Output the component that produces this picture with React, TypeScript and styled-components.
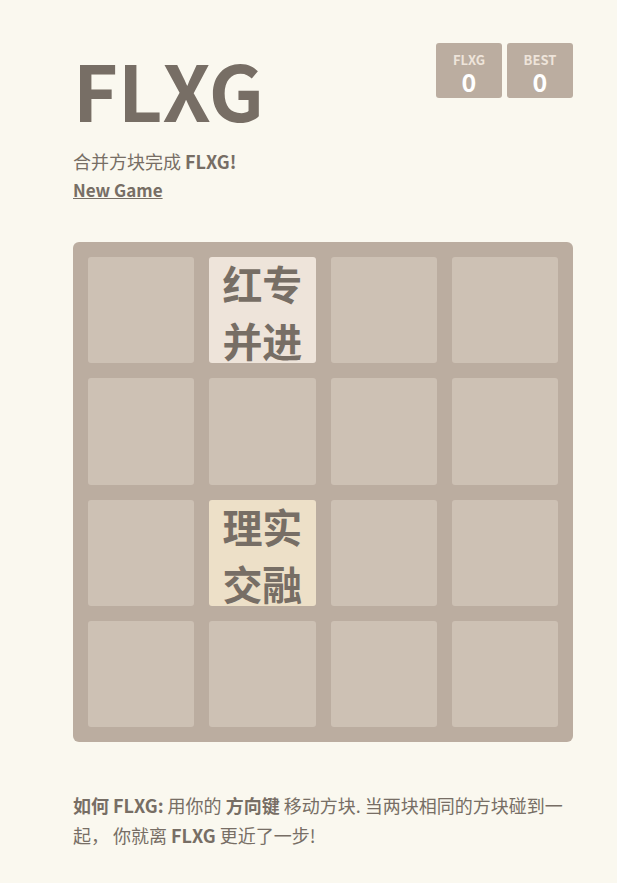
import React from "react";
import styled, { createGlobalStyle } from "styled-components";

const GlobalStyle = createGlobalStyle`
  html, body {
    margin: 0;
    padding: 0;
    background: #faf8ef;
    color: #776e65;
    font-family: "Noto Sans CJK SC", sans-serif;
    font-size: 18px;
  }
`;

const Container = styled.div`
  width: 500px;
  margin: 0 0 0 73px;
  padding-top: 35px;
`;

const Heading = styled.div`
  display: flex;
  justify-content: space-between;
  align-items: flex-start;
`;

const Title = styled.h1`
  margin: 0;
  font-size: 77px;
  font-weight: bold;
  line-height: 108px;
`;

const Scores = styled.div`
  display: flex;
  gap: 5px;
  margin-top: 8px;
`;

const ScoreBox = styled.div`
  position: relative;
  background: #bbada0;
  padding: 15px 25px;
  height: 25px;
  min-width: 16px;
  border-radius: 3px;
  color: #ffffff;
  font-size: 25px;
  font-weight: bold;
  line-height: 47px;
  text-align: center;
`;

const ScoreLabel = styled.span`
  position: absolute;
  top: 10px;
  left: 0;
  width: 100%;
  font-size: 13px;
  line-height: 13px;
  color: #eee4da;
  text-transform: uppercase;
`;

const Intro = styled.p`
  margin: 3px 0 0;
  line-height: 30px;
`;

const NewGame = styled.a`
  display: block;
  color: #776e65;
  font-size: 17px;
  font-weight: bold;
  text-decoration: underline;
  line-height: 28px;
  cursor: pointer;
`;

const Board = styled.div`
  margin-top: 38px;
  width: 500px;
  height: 500px;
  box-sizing: border-box;
  padding: 15px;
  background: #bbada0;
  border-radius: 6px;
  display: grid;
  grid-template-columns: repeat(4, minmax(0, 1fr));
  grid-template-rows: repeat(4, minmax(0, 1fr));
  gap: 15px;
`;

const Cell = styled.div<{ $tone?: "empty" | "two" | "four" }>`
  border-radius: 3px;
  background: ${(p) =>
    p.$tone === "two" ? "#eee4da" : p.$tone === "four" ? "#ede0c8" : "#cdc1b4"};
  display: flex;
  align-items: center;
  justify-content: center;
  min-height: 0;
  text-align: center;
  font-size: 40px;
  font-weight: bold;
  line-height: 57px;
  color: #776e65;
  overflow: visible;
`;

const TileText = styled.span`
  display: block;
  margin-top: 4px;
`;

const Explanation = styled.p`
  margin: 48px 0 0;
  line-height: 30px;
`;

type CellData = { tone: "empty" | "two" | "four"; text?: string };

const cells: CellData[] = Array.from({ length: 16 }, () => ({ tone: "empty" }));
cells[1] = { tone: "two", text: "红专并进" };
cells[9] = { tone: "four", text: "理实交融" };

export default function App() {
  return (
    <>
      <GlobalStyle />
      <Container>
        <Heading>
          <Title>FLXG</Title>
          <Scores>
            <ScoreBox>
              <ScoreLabel>FLXG</ScoreLabel>0
            </ScoreBox>
            <ScoreBox>
              <ScoreLabel>BEST</ScoreLabel>0
            </ScoreBox>
          </Scores>
        </Heading>
        <Intro>
          合并方块完成 <strong>FLXG!</strong>
        </Intro>
        <NewGame>New Game</NewGame>
        <Board>
          {cells.map((c, i) => (
            <Cell key={i} $tone={c.tone}>
              {c.text && <TileText>{c.text}</TileText>}
            </Cell>
          ))}
        </Board>
        <Explanation>
          <strong>如何 FLXG:</strong> 用你的 <strong>方向键</strong> 移动方块. 当两块相同的方块碰到一起，
          你就离 <strong>FLXG</strong> 更近了一步!
        </Explanation>
      </Container>
    </>
  );
}
